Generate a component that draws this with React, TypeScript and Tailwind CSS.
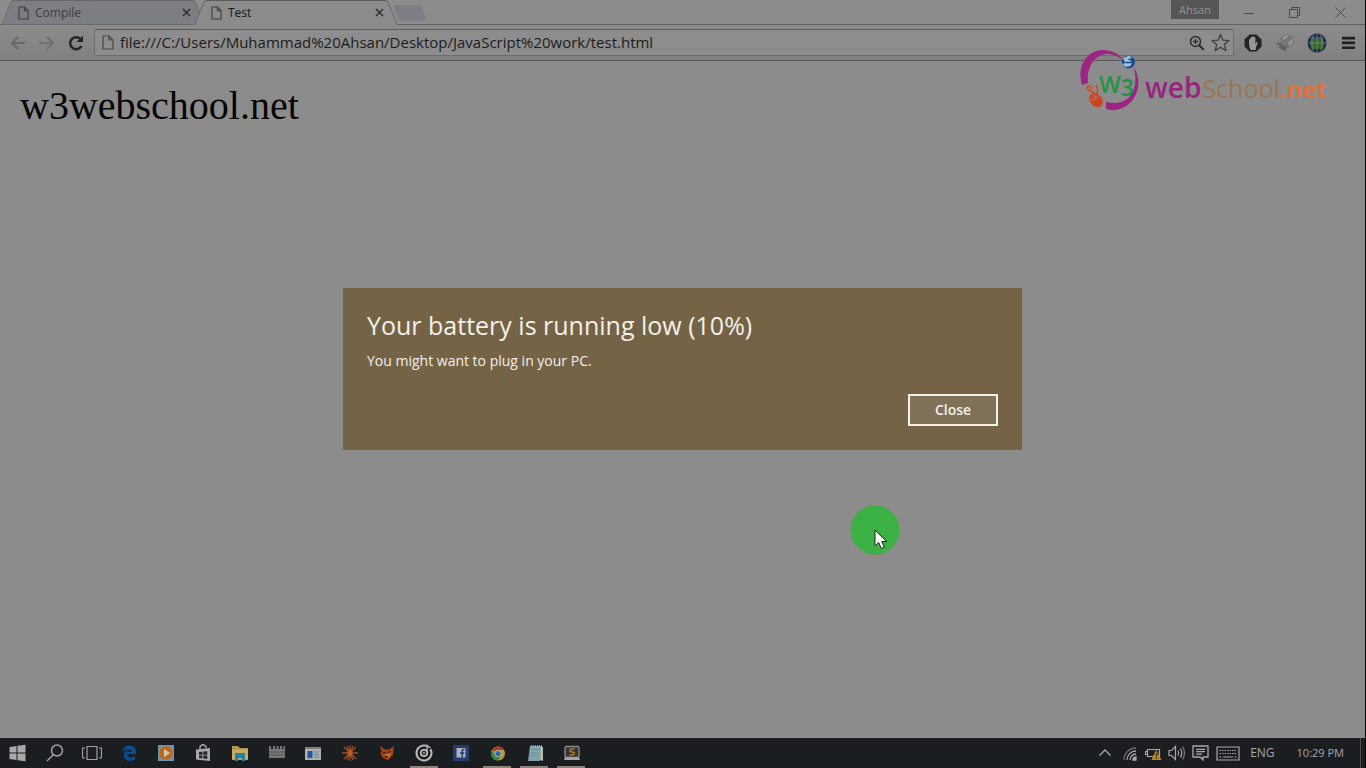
import type { ReactNode } from "react";

const ui = "font-['Open_Sans','Noto_Sans',sans-serif]";

function PageIcon({ className }: { className: string }) {
  return (
    <svg viewBox="0 0 12 15" className={className} fill="none" stroke="currentColor" strokeWidth="1.2">
      <path d="M1 1h6l4 4v9H1zM7 1v4h4" />
    </svg>
  );
}

function Tab({ title, active }: { title: string; active?: boolean }) {
  const fill = active ? "bg-[#8b8b8b] border-[#5c5c5c]" : "bg-[#7d7e83] border-[#68696c]";
  return (
    <div
      className={`relative flex h-[25px] w-[203px] shrink-0 items-center pr-[12px] pl-[18px] ${
        active ? "z-10 -ml-[10px] text-[#161616]" : "text-[#3c3d40]"
      }`}
    >
      <span className={`absolute top-0 bottom-0 left-[6px] w-1/2 -skew-x-[22deg] rounded-tl-[3px] border-t border-l ${fill} ${active ? "" : "border-b"}`} />
      <span className={`absolute top-0 right-[4px] bottom-0 w-1/2 skew-x-[22deg] rounded-tr-[3px] border-t border-r ${fill} ${active ? "" : "border-b"}`} />
      <button type="button" role="tab" aria-selected={!!active} className="relative flex grow items-center gap-[6px] text-left text-[12px]">
        <PageIcon className="h-[14px] w-[11px] text-[#3f3f3f]" />
        {title}
      </button>
      <button type="button" aria-label={`Close ${title}`} className="relative text-[#303030]">
        <svg viewBox="0 0 9 9" className="h-[9px] w-[9px]" stroke="currentColor" strokeWidth="1.5">
          <path d="M1 1l7 7M8 1L1 8" />
        </svg>
      </button>
    </div>
  );
}

function IconButton({ label, children, className = "" }: { label: string; children: ReactNode; className?: string }) {
  return (
    <button type="button" aria-label={label} className={`flex shrink-0 items-center justify-center ${className}`}>
      {children}
    </button>
  );
}

function TitleBar() {
  return (
    <div className="flex h-[25px] items-start border-b border-[#606060] bg-[#8c8c8c]">
      <div role="tablist" className="flex">
        <Tab title="Compile" />
        <Tab title="Test" active />
      </div>
      <button type="button" aria-label="New tab" className="mt-[5px] h-[16px] w-[28px] skew-x-[20deg] rounded-[3px] bg-[#7e7f84]" />
      <div className="grow" />
      <button type="button" className="mr-[15px] h-[19px] w-[48px] bg-[#565656] text-[11px] leading-[18px] text-[#949494]">
        Ahsan
      </button>
      <div className="flex h-[24px] items-center text-[#4a4a4a]">
        <IconButton label="Minimize" className="w-[30px]">
          <svg viewBox="0 0 11 11" className="h-[11px] w-[11px]" stroke="currentColor"><path d="M0 6.5h10" /></svg>
        </IconButton>
        <IconButton label="Restore" className="ml-[15px] w-[30px]">
          <svg viewBox="0 0 11 11" className="h-[11px] w-[11px]" stroke="currentColor" fill="none"><path d="M.5 2.5h8v8h-8zM2.500 2.500v-2h8v8h-2" /></svg>
        </IconButton>
        <IconButton label="Close window" className="mr-[10px] ml-[16px] w-[30px]">
          <svg viewBox="0 0 11 11" className="h-[11px] w-[11px]" stroke="currentColor"><path d="M.5 .5l10 10M10.500 .5l-10 10" /></svg>
        </IconButton>
      </div>
    </div>
  );
}

function Toolbar() {
  return (
    <div className="flex h-[36px] items-center border-b border-[#585858] bg-linear-to-b from-[#8b8b8b] to-[#818181] pr-[10px] pl-[10px]">
      <IconButton label="Back" className="mr-[13px] text-[#686868]">
        <svg viewBox="0 0 16 14" className="h-[14px] w-[16px]" fill="none" stroke="currentColor" strokeWidth="2.2"><path d="M15 7H2M8 1L2 7l6 6" /></svg>
      </IconButton>
      <IconButton label="Forward" className="mr-[13px] text-[#707070]">
        <svg viewBox="0 0 16 14" className="h-[14px] w-[16px]" fill="none" stroke="currentColor" strokeWidth="2.2"><path d="M0 7h14M8 1l6 6-6 6" /></svg>
      </IconButton>
      <IconButton label="Reload" className="mr-[10px] text-[#262626]">
        <svg viewBox="0 0 16 16" className="h-[16px] w-[16px]">
          <path d="M13.500 11A6 6 0 1 1 12.500 4" fill="none" stroke="currentColor" strokeWidth="2.500" />
          <path d="M15 .5V7H8.500z" fill="currentColor" />
        </svg>
      </IconButton>
      <div className="flex h-[27px] grow items-center gap-[6px] rounded-[2px] border border-[#6c6c6c] border-t-[#5c5c5c] bg-[#8d8d8d] pr-[3px] pl-[7px]">
        <PageIcon className="h-[15px] w-[12px] shrink-0 text-[#484848]" />
        <input
          type="text"
          aria-label="Address"
          defaultValue="file:///C:/Users/Muhammad%20Ahsan/Desktop/JavaScript%20work/test.html"
          className="h-[24px] min-w-0 grow self-start bg-transparent text-[15px] text-[#1c1c1c] outline-none"
        />
        <svg viewBox="0 0 16 16" className="h-[16px] w-[16px] shrink-0 text-[#2b2b2b]" fill="none" stroke="currentColor">
          <circle cx="6.500" cy="6.500" r="5" strokeWidth="1.500" />
          <path d="M4 6.500h5M6.500 4v5" strokeWidth="1.300" />
          <path d="M10.200 10.200l4.500 4.500" strokeWidth="2" />
        </svg>
        <svg viewBox="0 0 20 20" className="h-[19px] w-[19px] shrink-0 text-[#424242]" fill="none" stroke="currentColor" strokeWidth="1.400" strokeLinejoin="round">
          <path d="M10 1.500l2.500 6 6.500.5-5 4.200 1.700 6.300L10 15l-5.700 3.500L6 12.200 1 8l6.500-.5z" />
        </svg>
      </div>
      <IconButton label="Ad blocker" className="ml-[9px]">
        <svg viewBox="0 0 20 20" className="h-[20px] w-[20px]">
          <path d="M6.500 1.500h7l5 5v7l-5 5h-7l-5-5v-7z" fill="#232323" />
          <path d="M6 10.500V6.800c0-1.100 1.500-1.100 1.500 0V4.800c0-1.100 1.600-1.100 1.600 0V4c0-1.100 1.700-1.100 1.700 0v.8c0-1.100 1.600-1.100 1.600 0V11l1-1.500c.7-.9 1.700-.3 1.300.7L12.800 15v2H7.500l-1.200-4z" fill="#979797" />
        </svg>
      </IconButton>
      <IconButton label="Download extension" className="ml-[12px]">
        <svg viewBox="0 0 20 20" className="h-[20px] w-[20px]">
          <circle cx="12" cy="8" r="7" fill="#757575" />
          <path d="M8 4a6 6 0 0 1 6-2q-1 3-6 5zM12 10q4-2 6-5 1 5-3 8z" fill="#949494" />
          <path d="M.5 9.500L6 8l3 3.500 3-.5-1 7.500-8-4 2-1z" fill="#636363" />
          <path d="M1.500 9.500L6 8.500l2.500 3.500 3-.5" fill="none" stroke="#8e8e8e" />
        </svg>
      </IconButton>
      <IconButton label="Globe extension" className="ml-[12px]">
        <svg viewBox="0 0 20 20" className="h-[20px] w-[20px]" fill="none">
          <circle cx="10" cy="10" r="9.500" fill="#1b2c4a" />
          <path d="M4 6h12l1 4-1 6H4L3 10z" fill="#3a6a27" />
          <path d="M10 1v18M1 10h18M3 5h14M6.500 2Q3 10 6.500 18M13.500 2q3.500 8 0 16" stroke="#71898c" strokeWidth=".8" />
        </svg>
      </IconButton>
      <IconButton label="Menu" className="ml-[15px]">
        <svg viewBox="0 0 13 14" className="h-[14px] w-[13px]" fill="#202020"><path d="M0 .8h13v2.700H0zM0 5.600h13v2.700H0zM0 10.400h13v2.700H0z" /></svg>
      </IconButton>
    </div>
  );
}

function Watermark() {
  return (
    <div className="pointer-events-none absolute top-[47px] right-[38px] z-20 flex items-end">
      <svg viewBox="0 0 64 66" className="h-[66px] w-[64px]">
        <path d="M3 38C-3 18 9 2 26 3q11 1 18 9l-3-1C24 0 7 13 9 36z" fill="#9c2483" />
        <path d="M55 20c11 19 0 41-19 43-5 1-8-1-9-2v-6c20 5 34-8 28-35z" fill="#9c2483" />
        <circle cx="49.500" cy="15" r="6.500" fill="#164b8e" />
        <path d="M44 11.500l6-3 3.500 2.500-5 1 5 3-2 4-5 1-3-3 3-1z" fill="#a1c2d9" />
        <path d="M46.500 15.500h7" stroke="#1a407a" strokeWidth="1.500" />
        <path d="M15 48c0-6-7-3-7-7 1-3 5-2 5 1M17 47c5-3-1-5 1-9" fill="none" stroke="#c94f29" strokeWidth="1.800" />
        <ellipse cx="17" cy="53" rx="6" ry="8" transform="rotate(-40 17 53)" fill="#ce4621" />
        <path d="M12 53c3 0 7-2 8-6M14 47l3 4" fill="none" stroke="#8d8d8d" />
        <text x="20" y="46" fontFamily="Open Sans" fontWeight="600" fontSize="23" fill="#239344">
          W<tspan dy="3">3</tspan>
        </text>
      </svg>
      <div className="ml-[2px] flex items-baseline pb-[8px] leading-[32px]">
        <span className="text-[28px] font-semibold text-[#97247f]">web</span>
        <span className="ml-[1px] text-[25px] text-[#997651]">School</span>
        <span className="text-[24px] font-bold text-[#df713b]">.net</span>
      </div>
    </div>
  );
}

function BatteryDialog() {
  return (
    <section role="alertdialog" aria-labelledby="battery-title" className="flex min-h-[162px] w-full max-w-[679px] flex-col bg-[#756346] px-[24px] pt-[20px] pb-[24px] text-[#f4f0ea]">
      <h2 id="battery-title" className="text-[25px] leading-[35px]">Your battery is running low (10%)</h2>
      <p className="mt-[8px] text-[14px] leading-[20px]">You might want to plug in your PC.</p>
      <button type="button" className="mt-auto h-[32px] w-[90px] self-end border-2 border-[#f4f0ea] bg-[#7f7058] text-[14px] leading-[20px] font-semibold">
        Close
      </button>
    </section>
  );
}

const apps: { name: string; open?: boolean; icon: ReactNode }[] = [
  { name: "Start", icon: <path d="M1.500 4l7-1v6.500h-7zM9.500 2.800l8-1.100v7.800h-8zM1.500 10.500h7V17l-7-1zM9.500 10.500h8v7.800l-8-1.100z" fill="#a9a9a9" /> },
  { name: "Search", icon: <path d="M8 12L2 18M17.500 7.500a5.500 5.500 0 1 1-11 0 5.500 5.500 0 0 1 11 0z" fill="none" stroke="#a0a0a0" strokeWidth="1.500" /> },
  { name: "Task view", icon: <path d="M5 3.500h10v13H5zM3 5H.500v10H3M17 5h2.500v10H17" fill="none" stroke="#a0a0a0" strokeWidth="1.200" /> },
  { name: "Edge", icon: <path d="M3 9C4 4 7 2.500 10.500 2.500c4.500 0 7 3 6.500 8.500H8c.5 3.800 5 4.300 8 2.300V16.500c-5 3-11.500 1-11-5C5 9 6.500 7.500 8.500 6 5.500 6.500 4 7.800 3 9zM8 8.800h4.800c0-3-4.400-3-4.800 0z" fill="#084e91" fillRule="evenodd" /> },
  {
    name: "Media player",
    icon: <><path d="M2 2h16v16H2z" fill="#6f94a8" /><circle cx="10" cy="10" r="6.800" fill="#be681c" /><path d="M8 6l6 4-6 4z" fill="#d6c8b6" /></>,
  },
  {
    name: "Store",
    icon: <><path d="M3 6.500l14-1.500v13L3 16.500z" fill="#a7a7a7" /><path d="M7 6V3.500q3-3.500 6 0V5" fill="none" stroke="#a7a7a7" strokeWidth="1.400" /><path d="M6 9l3.500-.3v3H6zM10.300 8.600l4-.3v3.400h-4zM6 12.400h3.500v3L6 15zM10.300 12.400h4V16l-4-.5z" fill="#25282b" /></>,
  },
  {
    name: "File Explorer",
    icon: <><path d="M2 3h6l2 2h8v12H2z" fill="#b4974b" /><path d="M2 6.500h16V16H2z" fill="#c5ad66" /><path d="M5 10h10v8h-3v-3H8v3H5z" fill="#267fa6" /></>,
  },
  {
    name: "Castle",
    icon: <><path d="M2 3h2v3h2V3h2v3h1.500V3h2v3H13V3h2v3h1.500V3H18v12H2z" fill="#777" /><path d="M2 9h16M2 12h16" stroke="#3c3f41" strokeWidth=".6" /></>,
  },
  {
    name: "Contacts",
    icon: <><path d="M2 4h16v13H2z" fill="#aeb0af" /><path d="M2 4h16v2H2z" fill="#7d8081" /><path d="M4.500 8h5v7h-5z" fill="#17589e" /><path d="M11 9h5M11 11.500h5M11 14h5" stroke="#6c7d91" /></>,
  },
  {
    name: "Spark",
    icon: <><path d="M10 2v16M2 10h16M4 4l12 12M16 4L4 16M7 3l6 14M13 3L7 17" stroke="#a44e20" strokeWidth="1.300" /><circle cx="10" cy="10" r="2.500" fill="#b95d28" /></>,
  },
  {
    name: "Fox",
    icon: <><path d="M3 3l5 3.500h4L17 3l-1 9-5 5-5-2-3-5 2-1z" fill="#a53e13" /><path d="M4 5l3 4 3 2 5-5-2 8-3 2z" fill="#c06b22" /><path d="M6 9l3 1.500M14 8l-3 2M8 14h3" stroke="#1e1c1b" strokeWidth="1.300" /></>,
  },
  {
    name: "Music",
    open: true,
    icon: <><path d="M12 2.800A7.500 7.500 0 1 0 16.500 6.300" fill="none" stroke="#b9b9b9" strokeWidth="2" /><circle cx="10" cy="10" r="3.200" fill="none" stroke="#b9b9b9" strokeWidth="1.800" /><circle cx="10" cy="10" r="1" fill="#b9b9b9" /><path d="M13 9V2.500l3.500 2.500" fill="none" stroke="#b9b9b9" strokeWidth="1.500" /></>,
  },
  {
    name: "Facebook",
    icon: <><path d="M2 2h16v16H2z" fill="#263c70" /><path d="M5.500 5h9v9.500h-9z" fill="#aeb4bd" /><path d="M13.500 6.500h-1q-1.300 0-1.300 1.500v6.500M9 10h4.300" fill="none" stroke="#263c70" strokeWidth="1.500" /></>,
  },
  {
    name: "Chrome",
    open: true,
    icon: <><circle cx="10" cy="10.500" r="7" fill="#bb9c2e" /><path d="M10 10.500L3.900 7A7 7 0 0 1 16.100 7H10z" fill="#ac382d" /><path d="M3.900 7L10 17.500a7 7 0 0 1-6.100-10.500z" fill="#308447" /><path d="M7 12.500l3 5 3.500-5z" fill="#308447" /><circle cx="10" cy="10.500" r="3.500" fill="#b5b9bb" /><circle cx="10" cy="10.500" r="2.600" fill="#2e69a6" /></>,
  },
  {
    name: "Notepad",
    open: true,
    icon: <><path d="M5 3h12l-2 15H3z" fill="#7ea3ac" /><path d="M16 4h2v14l-3-1z" fill="#b9b9a9" /><path d="M6 3h11" stroke="#b4bab9" strokeWidth="1.500" strokeDasharray="1 1" /><path d="M6.500 6.500H15M6 9.500h8.500M5.500 12.500H14" stroke="#6b929c" strokeWidth=".7" /></>,
  },
  {
    name: "Sublime Text",
    open: true,
    icon: <><rect x="3" y="3.500" width="14" height="11" rx="1.500" fill="#353535" stroke="#8f8f8f" strokeWidth="1.300" /><path d="M3 14h14l1 3H2z" fill="#a4a4a4" /><path d="M12.500 5.500L8 6.500v2l4 1v2l-4.500 1" fill="none" stroke="#b37b26" strokeWidth="1.400" /></>,
  },
];

function Taskbar() {
  return (
    <footer className="flex h-[30px] items-stretch bg-[#1b1e21] text-[#a8a8a8]">
      <div className="flex w-[590px] shrink-0">
        {apps.map((app) => (
          <button key={app.name} type="button" aria-label={app.name} className="relative flex flex-1 items-center justify-center">
            <svg viewBox="0 0 20 20" className="h-[20px] w-[20px]">{app.icon}</svg>
            {app.open && <span className="absolute right-[5px] bottom-0 left-[4px] h-[2px] bg-[#8b8177]" />}
          </button>
        ))}
      </div>
      <div className="grow" />
      <div className="flex items-center">
        <IconButton label="Show hidden icons" className="w-[14px]">
          <svg viewBox="0 0 14 14" className="h-[14px] w-[14px]" fill="none" stroke="currentColor" strokeWidth="1.400"><path d="M1.500 9.500L7 4l5.500 5.500" /></svg>
        </IconButton>
        <IconButton label="Network" className="ml-[10px] w-[16px]">
          <svg viewBox="0 0 16 16" className="h-[16px] w-[16px]" fill="none" stroke="currentColor" strokeWidth="1.300">
            <path d="M2 15A12 12 0 0 1 14 3" stroke="#6f6f6f" /><path d="M5 15a9 9 0 0 1 9-9M8 15a6 6 0 0 1 6-6" /><path d="M11 15a3 3 0 0 1 3-3v3z" fill="currentColor" />
          </svg>
        </IconButton>
        <IconButton label="Battery" className="ml-[7px] w-[17px]">
          <svg viewBox="0 0 17 16" className="h-[16px] w-[17px]" fill="none">
            <path d="M2.500 4.500h12v7h-12zM2 6.500H.500v3H2" stroke="#a8a8a8" strokeWidth="1.200" />
            <path d="M11 5l5.500 10h-10z" fill="#c0891c" /><path d="M11.500 8v3.500M11.500 12.500V14" stroke="#29231a" strokeWidth="1.300" />
          </svg>
        </IconButton>
        <IconButton label="Volume" className="ml-[6px] w-[17px]">
          <svg viewBox="0 0 17 16" className="h-[16px] w-[17px]" fill="none" stroke="currentColor" strokeWidth="1.200">
            <path d="M1 5.500h2.500l4-4v13l-4-4H1zM10 5.500q1.500 2.500 0 5M12.300 3.500q3 4.500 0 9" /><path d="M14.500 1.500q4 6.500 0 13" stroke="#777" />
          </svg>
        </IconButton>
        <IconButton label="Notifications" className="ml-[7px] w-[17px]">
          <svg viewBox="0 0 17 16" className="h-[16px] w-[17px]" fill="none" stroke="currentColor" strokeWidth="1.300"><path d="M1 1h15v11h-5v3l-3-3H1zM4 4.300h9M4 6.700h9M4 9.100h6" /></svg>
        </IconButton>
        <IconButton label="Touch keyboard" className="ml-[7px] w-[24px]">
          <svg viewBox="0 0 24 15" className="h-[15px] w-[24px]" fill="none" stroke="currentColor"><path d="M1 1h22v13H1z" strokeWidth="1.200" /><path d="M3.500 4.500h17M3.500 7.500h17" strokeDasharray="1.500 1" strokeWidth="1.100" /><path d="M3.500 11h2M7 11h10M18.500 11h2" /></svg>
        </IconButton>
        <button type="button" className="ml-[10px] text-[12px]">ENG</button>
        <button type="button" className="ml-[22px] text-[11px] whitespace-nowrap">10:29 PM</button>
      </div>
      <button type="button" aria-label="Show desktop" className="ml-[16px] w-[5px] border-l border-[#4b4d4f]" />
    </footer>
  );
}

export default function App() {
  return (
    <div className={`relative flex min-h-screen flex-col overflow-hidden border-r border-black bg-[#8c8c8c] ${ui}`}>
      <TitleBar />
      <Toolbar />
      <Watermark />
      <main className="relative flex grow flex-col">
        <h1 className="px-[20px] pt-[21px] font-['Liberation_Serif',serif] text-[40px] leading-[48px] text-[#050505]">w3webschool.net</h1>
        <div className="absolute inset-0 flex items-center justify-center pb-[61px]">
          <BatteryDialog />
        </div>
        <svg viewBox="0 0 50 50" className="absolute top-[444px] left-[850px] h-[50px] w-[50px]" aria-hidden="true">
          <circle cx="25" cy="25" r="24.500" fill="#3bb143" />
          <path d="M25 25v16l3.700-3.500 2.600 6 3-1.300-2.600-5.700h5z" fill="#fff" stroke="#222" />
        </svg>
      </main>
      <Taskbar />
    </div>
  );
}
